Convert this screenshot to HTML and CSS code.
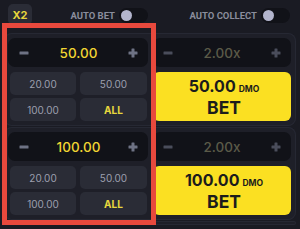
FILE: index.html
```html
<!DOCTYPE html>
<html>
<head>
<meta charset="utf-8">
<link rel="stylesheet" href="styles.css">
</head>
<body>
<div class="topbar">
  <div class="half half-left">
    <div class="x2">X2</div>
    <div class="opt"><span class="opt-label">AUTO BET</span><span class="toggle"><span class="knob"></span></span></div>
  </div>
  <div class="half half-right">
    <div class="opt"><span class="opt-label">AUTO COLLECT</span><span class="toggle"><span class="knob"></span></span></div>
  </div>
</div>

<div class="card">
  <div class="col-left">
    <div class="stepper">
      <svg class="ico" width="10" height="10" viewBox="0 0 10 10"><rect x="0.5" y="3.5" width="9" height="3" rx="0.5"/></svg>
      <span class="val">50.00</span>
      <svg class="ico" width="10" height="10" viewBox="0 0 10 10"><rect x="0.5" y="3.5" width="9" height="3" rx="0.5"/><rect x="3.5" y="0.5" width="3" height="9" rx="0.5"/></svg>
    </div>
    <div class="chips">
      <div class="chip">20.00</div>
      <div class="chip">50.00</div>
      <div class="chip">100.00</div>
      <div class="chip chip-all">ALL</div>
    </div>
  </div>
  <div class="col-right">
    <div class="stepper stepper-dim">
      <svg class="ico" width="10" height="10" viewBox="0 0 10 10"><rect x="0.5" y="3.5" width="9" height="3" rx="0.5"/></svg>
      <span class="val">2.00x</span>
      <svg class="ico" width="10" height="10" viewBox="0 0 10 10"><rect x="0.5" y="3.5" width="9" height="3" rx="0.5"/><rect x="3.5" y="0.5" width="3" height="9" rx="0.5"/></svg>
    </div>
    <div class="bet">
      <div class="bet-amount"><span class="amt">50.00</span><span class="cur">DMO</span></div>
      <div class="bet-label">BET</div>
    </div>
  </div>
</div>

<div class="card">
  <div class="col-left">
    <div class="stepper">
      <svg class="ico" width="10" height="10" viewBox="0 0 10 10"><rect x="0.5" y="3.5" width="9" height="3" rx="0.5"/></svg>
      <span class="val">100.00</span>
      <svg class="ico" width="10" height="10" viewBox="0 0 10 10"><rect x="0.5" y="3.5" width="9" height="3" rx="0.5"/><rect x="3.5" y="0.5" width="3" height="9" rx="0.5"/></svg>
    </div>
    <div class="chips">
      <div class="chip">20.00</div>
      <div class="chip">50.00</div>
      <div class="chip">100.00</div>
      <div class="chip chip-all">ALL</div>
    </div>
  </div>
  <div class="col-right">
    <div class="stepper stepper-dim">
      <svg class="ico" width="10" height="10" viewBox="0 0 10 10"><rect x="0.5" y="3.5" width="9" height="3" rx="0.5"/></svg>
      <span class="val">2.00x</span>
      <svg class="ico" width="10" height="10" viewBox="0 0 10 10"><rect x="0.5" y="3.5" width="9" height="3" rx="0.5"/><rect x="3.5" y="0.5" width="3" height="9" rx="0.5"/></svg>
    </div>
    <div class="bet">
      <div class="bet-amount"><span class="amt">100.00</span><span class="cur">DMO</span></div>
      <div class="bet-label">BET</div>
    </div>
  </div>
</div>

<div class="card card-peek"></div>

<div class="highlight"></div>
</body>
</html>
```

FILE: styles.css
```css
* { box-sizing: border-box; }

html, body {
  margin: 0;
  padding: 0;
}

body {
  width: 300px;
  height: 229px;
  overflow: hidden;
  background: #1a1b23;
  font-family: "Inter", "Roboto", "Liberation Sans", sans-serif;
  position: relative;
}

.topbar {
  height: 31px;
  display: flex;
}

.half {
  width: 150px;
  display: flex;
  align-items: flex-start;
  padding-top: 4px;
}

.half-left {
  justify-content: space-between;
  padding-left: 8px;
  padding-right: 2px;
}

.half-right {
  justify-content: flex-end;
  padding-right: 10px;
}

.x2 {
  width: 24px;
  height: 21px;
  border-radius: 5px;
  background: #2a2c36;
  color: #e6d63c;
  font-size: 11px;
  font-weight: 700;
  display: flex;
  align-items: center;
  justify-content: center;
}

.opt {
  display: flex;
  align-items: center;
  height: 21px;
  margin-top: 1px;
}

.opt-label {
  font-family: "Roboto", "Liberation Sans", sans-serif;
  color: #8a8d9c;
  font-size: 9.5px;
  font-weight: 700;
  margin-right: 4px;
}

.toggle {
  width: 29px;
  height: 15px;
  border-radius: 8px;
  background: #111218;
  display: flex;
  align-items: center;
  padding-left: 2px;
}

.knob {
  width: 11px;
  height: 11px;
  border-radius: 50%;
  background: #b3b5cd;
}

.card {
  margin: 2px 4px 0 4px;
  height: 93px;
  padding: 5px 5px 4px 4px;
  display: flex;
  gap: 5px;
  background: #1e1f28;
  border-radius: 8px;
  box-shadow: inset 0 0 0 1px #262833;
}

.card + .card { margin-top: 1px; }

.card-peek { margin-top: 7px; height: 4px; padding: 0; }

.col-left { width: 140px; display: flex; flex-direction: column; gap: 5px; }
.col-right { width: 138px; display: flex; flex-direction: column; gap: 5px; }

.stepper {
  height: 29px;
  border-radius: 7px;
  background: #111218;
  display: flex;
  align-items: center;
  justify-content: space-between;
  padding: 0 10px 0 11px;
}

.ico { fill: #6e7284; display: block; }

.val {
  color: #f1d532;
  font-size: 13.5px;
  font-weight: 500;
}

.stepper-dim .ico { fill: #4a4d5b; }
.stepper-dim .val { color: #5b5a48; }
.stepper-dim { padding: 0 10px 0 10px; }

.chips {
  display: grid;
  grid-template-columns: 66px 67px;
  grid-auto-rows: 23px;
  column-gap: 4px;
  row-gap: 3px;
  padding-left: 2px;
}

.chip {
  background: #2a2c36;
  border-radius: 5px;
  color: #9c9fae;
  font-size: 10px;
  display: flex;
  align-items: center;
  justify-content: center;
}

.chip-all {
  color: #e7d83e;
  font-weight: 700;
}

.bet {
  height: 49px;
  border-radius: 6px;
  background: #fbe022;
  color: #1c1c1c;
  display: flex;
  flex-direction: column;
  align-items: center;
  justify-content: center;
  padding-left: 4px;
}

.bet-amount {
  display: flex;
  align-items: baseline;
  line-height: 18px;
}

.amt {
  font-size: 16px;
  font-weight: 700;
}

.cur {
  font-size: 8.5px;
  font-weight: 700;
  margin-left: 3px;
}

.bet-label {
  font-size: 17.5px;
  font-weight: 700;
  line-height: 19px;
}

.highlight {
  position: absolute;
  left: 2px;
  top: 23px;
  width: 154px;
  height: 202px;
  border: 5px solid #e8493d;
  pointer-events: none;
}
```
